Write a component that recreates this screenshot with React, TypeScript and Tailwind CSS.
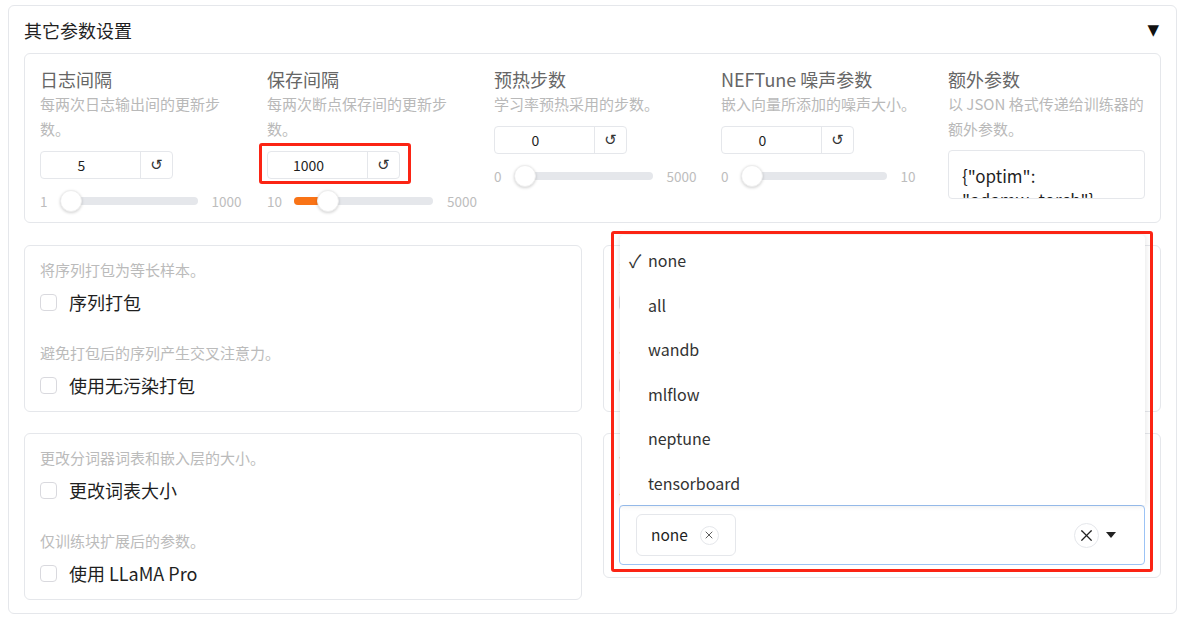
import React from "react";
import { X } from "lucide-react";

type NS = {
  label: string;
  desc: string;
  descW?: string;
  value: string;
  min: string;
  max: string;
  frac: number;
  track: number;
  filled?: boolean;
  boxed?: boolean;
};

function NumSlider(p: NS) {
  const thumb = 22;
  const left = (p.track - thumb) * p.frac;
  return (
    <div className="flex flex-col">
      <div className="text-[18px] leading-[24px] text-[#666]">{p.label}</div>
      <div className={`text-[15px] leading-[25px] text-[#b9b9b9] ${p.descW ?? ""}`}>{p.desc}</div>
      <div className="relative mt-[10px] w-[133px]">
        <div className="flex h-[28px] w-[133px] rounded-[4px] border border-[#e5e7eb] bg-white">
          <div className="flex w-[99px] items-center justify-center pr-[18px] text-[14px] text-[#1f1f1f]">{p.value}</div>
          <div className="flex flex-1 items-center justify-center border-l border-[#e5e7eb] text-[15px] text-[#333] font-['DejaVu_Sans',sans-serif]">↺</div>
        </div>
        {p.boxed && (
          <div className="pointer-events-none absolute left-[-8px] top-[-8px] h-[41px] w-[152px] rounded-[3px] border-[3px] border-[#fb2414]" />
        )}
      </div>
      <div className="mt-[11px] flex h-[22px] items-center whitespace-nowrap text-[13.5px] text-[#bdbdbd]">
        <span className="shrink-0">{p.min}</span>
        <div className="relative ml-[12px] h-[8px] shrink-0 rounded-full bg-[#e5e7eb]" style={{ width: p.track }}>
          {p.filled && (
            <div className="absolute left-0 top-0 h-[8px] rounded-full bg-[#f97316]" style={{ width: left + thumb / 2 }} />
          )}
          <div
            className="absolute top-[-7px] h-[22px] w-[22px] rounded-full border border-[#eee] bg-white shadow-[0_1px_3px_rgba(0,0,0,0.18)]"
            style={{ left }}
          />
        </div>
        <span className="ml-[14px] shrink-0">{p.max}</span>
      </div>
    </div>
  );
}

function Check({ desc, label, first }: { desc: string; label: string; first?: boolean }) {
  return (
    <div className={first ? "" : "mt-[29px]"}>
      <div className="text-[15px] leading-[20px] text-[#bbbbbb]">{desc}</div>
      <div className="mt-[10px] flex h-[24px] items-center">
        <div className="h-[17px] w-[17px] rounded-[4px] border border-[#d9d9de] bg-white" />
        <span className="ml-[12px] text-[18px] text-[#1f1f1f]">{label}</span>
      </div>
    </div>
  );
}

function CheckCard({ a, b }: { a: [string, string]; b: [string, string] }) {
  return (
    <div className="h-[167px] rounded-[6px] border border-[#e5e7eb] bg-white px-[15px] pt-[14px]">
      <Check desc={a[0]} label={a[1]} first />
      <Check desc={b[0]} label={b[1]} />
    </div>
  );
}

const items = ["none", "all", "wandb", "mlflow", "neptune", "tensorboard"];

export default function App() {
  return (
    <div className="h-[625px] w-[1189px] bg-white font-['Noto_Sans_CJK_SC',sans-serif] pt-[5px] pl-[8px]">
      <div className="w-[1169px] rounded-[6px] border border-[#e5e7eb] px-[15px] pt-[12px] pb-[13px]">
        <div className="flex h-[24px] items-center justify-between">
          <span className="text-[18px] leading-[24px] text-[#1f1f1f]">其它参数设置</span>
          <span className="mr-[2px] text-[15px] text-[#111] font-['DejaVu_Sans',sans-serif]">▼</span>
        </div>

        <div className="mt-[11px] rounded-[6px] border border-[#e5e7eb] px-[15px] pt-[13px] pb-[10px]">
          <div className="grid grid-cols-[197px_197px_197px_197px_197px] items-start gap-x-[30px]">
            <NumSlider label="日志间隔" desc="每两次日志输出间的更新步数。" descW="max-w-[185px]" value="5" min="1" max="1000" frac={0.004} track={138} />
            <NumSlider label="保存间隔" desc="每两次断点保存间的更新步数。" descW="max-w-[185px]" value="1000" min="10" max="5000" frac={0.198} track={139} filled boxed />
            <NumSlider label="预热步数" desc="学习率预热采用的步数。" value="0" min="0" max="5000" frac={0} track={139} />
            <NumSlider label="NEFTune 噪声参数" desc="嵌入向量所添加的噪声大小。" value="0" min="0" max="10" frac={0} track={146} />
            <div className="flex flex-col">
              <div className="text-[18px] leading-[24px] text-[#666]">额外参数</div>
              <div className="text-[15px] leading-[25px] text-[#b9b9b9]">以 JSON 格式传递给训练器的额外参数。</div>
              <div className="mt-[9px] h-[49px] overflow-hidden rounded-[4px] border border-[#e5e7eb] px-[13px] pt-[13px] text-[17px] leading-[24px] text-[#1f1f1f]">
                {'{"optim":'}
                <br />
                {'"adamw_torch"}'}
              </div>
            </div>
          </div>
        </div>

        <div className="mt-[22px] grid grid-cols-2 gap-x-[21px]">
          <div className="flex flex-col gap-[21px]">
            <CheckCard a={["将序列打包为等长样本。", "序列打包"]} b={["避免打包后的序列产生交叉注意力。", "使用无污染打包"]} />
            <CheckCard a={["更改分词器词表和嵌入层的大小。", "更改词表大小"]} b={["仅训练块扩展后的参数。", "使用 LLaMA Pro"]} />
          </div>

          <div className="relative flex flex-col gap-[21px]">
            <CheckCard a={["不在提示词的部分添加掩码（仅适用于 SFT）。", "在提示词上训练"]} b={["仅训练最后一轮对话。", "不训练历史对话"]} />
            <div className="h-[145px] rounded-[6px] border border-[#e5e7eb] bg-white px-[15px] pt-[14px]">
              <div className="text-[15px] leading-[20px] text-[#bbbbbb]">使用外部记录面板记录实验。</div>
              <div className="mt-[6px] text-[18px] leading-[24px] text-[#666]">启用外部记录面板</div>
              <div className="relative mt-[7px]">
                <div className="absolute bottom-full left-[1px] right-0 z-10 h-[270px] rounded-t-[4px] bg-white pt-[3px] shadow-[0_0_6px_rgba(0,0,0,0.12)]">
                  {items.map((it, i) => (
                    <div key={it} className="flex h-[44.5px] items-center pl-[9px] text-[16px] text-[#333]">
                      <span className="w-[19px] text-[18px] leading-none">{i === 0 ? "✓" : ""}</span>
                      <span>{it}</span>
                    </div>
                  ))}
                </div>
                <div className="flex h-[60px] items-center rounded-[4px] border border-[#9cc3f5] bg-white pl-[16px] pr-[28px]">
                  <div className="flex h-[42px] items-center rounded-[6px] border border-[#e5e7eb] pl-[14px] pr-[16px]">
                    <span className="text-[15.5px] text-[#1f1f1f]">none</span>
                    <span className="ml-[12px] flex h-[19px] w-[19px] items-center justify-center rounded-full border border-[#e5e7eb]">
                      <X size={12} strokeWidth={1.6} color="#333" />
                    </span>
                  </div>
                  <div className="flex-1" />
                  <span className="flex h-[25px] w-[25px] items-center justify-center rounded-full border border-[#e5e7eb]">
                    <X size={19} strokeWidth={1.5} color="#222" />
                  </span>
                  <svg className="ml-[7px]" width="10" height="6" viewBox="0 0 10 6">
                    <path d="M0 0 L10 0 L5 6 Z" fill="#222" />
                  </svg>
                </div>
              </div>
            </div>
            <div className="pointer-events-none absolute left-[8px] top-[-14px] z-20 h-[341px] w-[542px] rounded-[3px] border-[3px] border-[#fb2414]" />
          </div>
        </div>
      </div>
    </div>
  );
}
